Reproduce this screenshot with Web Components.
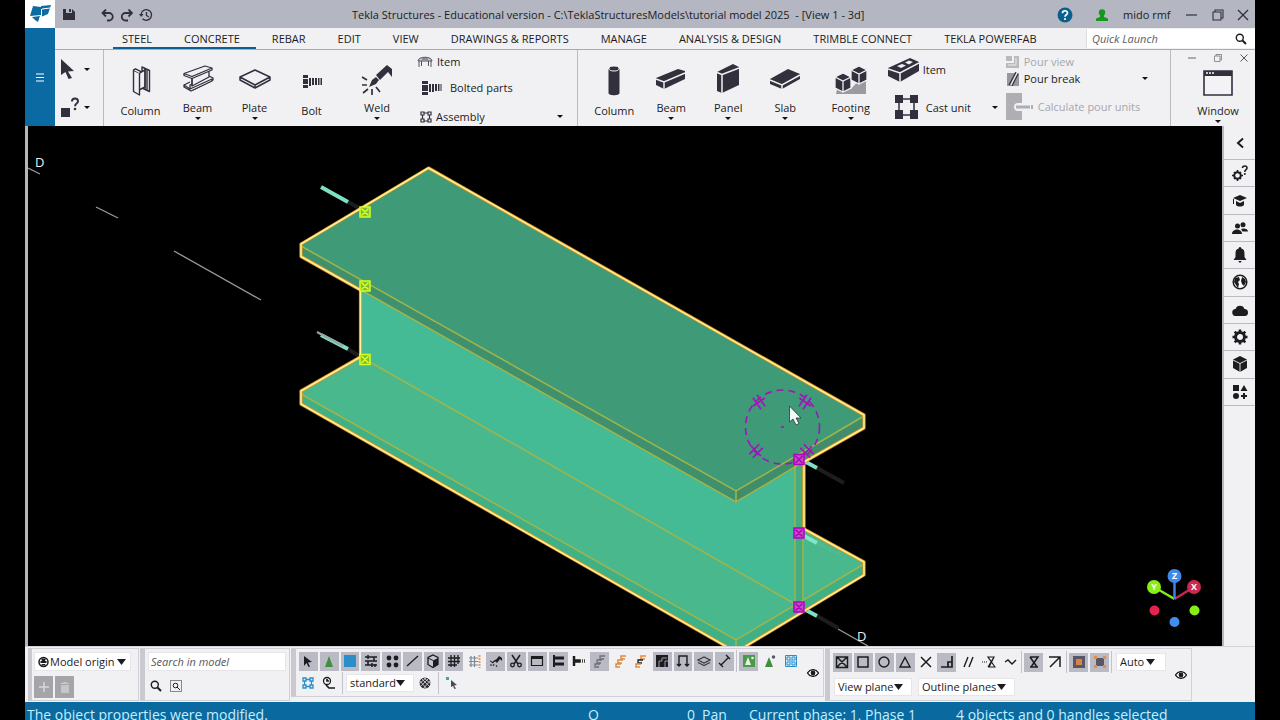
<!DOCTYPE html>
<html lang="en">
<head>
<meta charset="utf-8">
<title>Tekla Structures</title>
<style>
html,body{margin:0;height:100%;background:#000}
body{font-family:"Open Sans","Noto Sans",sans-serif;font-size:11px;color:#1c1b22}
</style>
</head>
<body>
<tk-app></tk-app>
<script>
const BASE = `*{box-sizing:border-box}
button,input,select{font:inherit;color:inherit;margin:0;padding:0;border:0;background:none;outline:0;border-radius:0}
button{display:flex;align-items:center;justify-content:center}
svg{display:block;flex:none}`;

function define(name, css, html) {
  const t = document.createElement('template');
  t.innerHTML = `<style>${BASE}${css}</style>${typeof html === 'string' ? html : ''}`;
  customElements.define(name, class extends HTMLElement {
    connectedCallback() {
      if (this.shadowRoot) return;
      const root = this.attachShadow({mode: 'open'});
      root.append(t.content.cloneNode(true));
      if (typeof html === 'function') root.innerHTML += html(this);
    }
  });
}

const D = '#33303e';
const K = '#1c1c20';
/* name: [width, height, markup] */
const ICONS = {
  logo: [24,20,`<g fill="#0a6ca3"><path d="M5 2l8 1 0 8-11 1z"/><path d="M13 2l10-1-3 9-7 3z"/><path d="M4 13l8-1-2 6-3-2z"/></g><path d="M13.500 5v8l-2 1M2 7l2-4M14 5l8-1" fill="none" stroke="#fff"/>`],
  save: [12,12,`<path d="M0 1h9l3 3v8H0z" fill="${D}"/><path d="M3 1h6v4H3z" fill="#b5b8c2"/><path d="M6 1h2v3H6z" fill="${D}"/>`],
  undo: [13,13,`<path d="M1 4h7a3.700 3.700 0 0 1 0 7.500H6M5 .5L1.500 4 5 7.500" fill="none" stroke="${D}" stroke-width="1.800"/>`],
  redo: [13,13,`<path d="M12 4H5.500a3.700 3.700 0 0 0 0 7.500H8M8.500.5L12 4 8.500 7.500" fill="none" stroke="${D}" stroke-width="1.800"/>`],
  history: [14,14,`<path d="M2 7a5.300 5.300 0 1 1 1.500 3.700M7.500 4v3.500l2.500 1.500" fill="none" stroke="${D}" stroke-width="1.300"/><path d="M0 6h4.500L2.200 9z" fill="${D}"/>`],
  help: [16,16,`<circle cx="8" cy="8" r="7.500" fill="#0a5f8d"/><path d="M5.500 6.200C5.500 3 10.500 3 10.500 6c0 1.700-2.500 1.800-2.500 3.800" fill="none" stroke="#fff" stroke-width="1.700"/><circle cx="8" cy="12" r="1.100" fill="#fff"/>`],
  user: [14,12,`<g fill="#19961f"><circle cx="7" cy="3.500" r="3.200"/><path d="M5 5h4v3l4 1.500V12H1V9.500L5 8z"/></g>`],
  min: [12,12,`<path d="M1 6h11" stroke="${D}" stroke-width="1.200"/>`],
  restore: [12,12,`<path d="M1 3h8v8H1zM3 3V1h8v8H9" fill="none" stroke="${D}" stroke-width="1.100"/>`],
  close: [12,12,`<path d="M1 1l10 10M11 1L1 11" stroke="${D}" stroke-width="1.300"/>`],
  minS: [8,8,`<path d="M0 4h8" stroke="#666"/>`],
  restoreS: [8,8,`<path d="M.5 2h5.500v5.500H.5zM2 2V.5h5.500V6H6" fill="none" stroke="#777" stroke-width=".8"/>`],
  closeS: [8,8,`<path d="M.5.5l7 7M7.500.5l-7 7" stroke="#555"/>`],
  menu: [8,9,`<path d="M0 1h8M0 4.500h8M0 8h8" stroke="#fff" stroke-width="1.200"/>`],
  search: [12,12,`<circle cx="4.800" cy="4.800" r="3.500" fill="none" stroke="${K}" stroke-width="1.400"/><path d="M7.500 7.500L11 11" stroke="${K}" stroke-width="2"/>`],
  caret: [6,3,`<path d="M0 0h6L3 3z" fill="#111"/>`],
  caretL: [9,6,`<path d="M0 0h9L4.500 6z" fill="#1c1c20"/>`],
  pointer: [14,20,`<path d="M0 0l13 12-6 .5 4 6.500-3.500 1-3-7L0 16z" fill="${D}"/>`],
  inquire: [19,20,`<path d="M0 11h9v9H0z" fill="${D}"/><path d="M11 4.500C11 .5 17 .5 17 4.200c0 2.300-3 2.300-3 5" fill="none" stroke="${D}" stroke-width="2"/><circle cx="14" cy="12" r="1.300" fill="${D}"/>`],
  colS: [32,32,`<g fill="#f1f1f4" stroke="${D}" stroke-width="1.400" stroke-linejoin="round"><path d="M17 3l7.500 3.500v21L17 24z"/><path d="M14 9l6-3v17l-6 3z"/><path d="M20 5v20M22 6v20"/><path d="M8.500 6l6 3v22l-6-3.500z"/><path d="M8.500 6l2-1.200 6 3-2 1.500"/></g>`],
  beamS: [32,32,`<g fill="#f1f1f4" stroke="${D}" stroke-width="1.300" stroke-linejoin="round"><path d="M8 21v3l3 2 20-10v-2l-4-2z"/><path d="M10 13l17-7v7L10 22z"/><path d="M2 9.500L23 2l7 2-20 8.500zM2 9.500v2l8 3 20-8.500V4"/><path d="M10 14v8M2 21l6 4 22-10v2L9 27l-7-4zM2 21l6-3"/></g>`],
  plateS: [32,32,`<path d="M1 13L16 6l15 7v3l-15 8L1 16zM1 13l15 8 15-8M16 21v3" fill="#f1f1f4" stroke="${D}" stroke-width="1.500" stroke-linejoin="round"/>`],
  boltS: [32,32,`<g fill="${D}"><path d="M7 11h5v3H7zM7 15h5v5H7zM7 21h5v3H7zM13 14h2v8h-2zM16 14h2v7h-2zM19 14h2v7h-2zM22 14h1.500v7H22zM24.500 14h1.500v7h-1.500z"/></g>`],
  weld: [32,32,`<path d="M15 11L26 1l5 4v8l-4-5-8 8z" fill="${D}"/><path d="M8 23l3-7 4-3 3 3-3 4z" fill="${D}"/><path d="M1 13l5 3M1 21h5M2 29l5-4M11 25v6M15 23l4 5" stroke="${D}" stroke-width="1.700"/>`],
  colC: [32,32,`<path d="M10.500 5v24c0 3 11 3 11 0V5z" fill="${D}"/><ellipse cx="16" cy="4.500" rx="5" ry="2.500" fill="${D}" stroke="#f1f1f4"/>`],
  beamC: [32,32,`<path d="M1 14l22-9 7 2v8L9 25l-8-4z" fill="${D}"/><path d="M1 15l8 3 21-9M9 18v8" stroke="#f1f1f4" stroke-width="1.400" fill="none"/>`],
  panel: [32,32,`<path d="M5 8L21 0l6 3v18L10 29l-5-2z" fill="${D}"/><path d="M5 8.500l5 2v19M10 10.500L27 4" stroke="#f1f1f4" stroke-width="1.500" fill="none"/>`],
  slab: [32,32,`<path d="M1 15l18-10 12 5v5L13 25 1 20z" fill="${D}"/><path d="M1 16l12 5 18-10M13 21v5" stroke="#f1f1f4" stroke-width="1.500" fill="none"/>`],
  footing: [32,32,`<path d="M2 25h14l8-9h7v14H1z" fill="#9a9aa0"/><g fill="${D}" stroke="#f1f1f4" stroke-width="1.300"><path d="M0 13l8-4 8 4v11l-8 4-8-4z"/><path d="M0 13l8 4 8-4M8 17v11"/><path d="M16 6l8-4 8 4v10l-8 4-8-4z"/><path d="M16 6l8 4 8-4M24 10v10"/></g>`],
  itemS: [16,14,`<path d="M1 6c0-5 14-5 14 0zM2 6v6M4.500 6v5M11.500 6v5M14 6v6M5 4h6" stroke="#55535e" fill="#c8c8ce"/>`],
  boltL: [21,14,`<g fill="${D}"><path d="M1 0h6v3H1zM1 4h6v6H1zM1 11h6v3H1zM8 3h2v8H8zM11 3h2v8h-2zM14 3h2v7h-2zM17 3h1.500v7H17zM19.500 3h1v7h-1z"/></g>`],
  assembly: [12,12,`<g fill="none" stroke="${D}" stroke-width="1.200"><path d="M1 1h3v3H1zM8 1h3v3H8zM1 8h3v3H1zM8 8h3v3H8zM4 2h4M4 10h4M2.500 4v4M9.500 4v4"/></g>`],
  itemC: [31,24,`<path d="M0 10L22 0l9 4v9L12 24 0 18z" fill="${D}"/><path d="M0 11l12 4L31 5M12 15v9" stroke="#f1f1f4" stroke-width="1.500" fill="none"/><g fill="#f1f1f4"><path d="M9 8l5-2 4 1.500-5 2.500zM17 4.500l4-2 4 1.500-4 2.500z"/></g>`],
  castunit: [24,24,`<g fill="${D}"><path d="M1 0h8v8H1zM16 0h8v8h-8zM1 15h8v9H1zM16 15h8v9h-8z"/></g><path d="M9 4h7M9 20h7M5 8v8M20 8v8" stroke="${D}" stroke-width="1.500"/>`],
  pourview: [14,14,`<path d="M0 1h6v5H0zM8 1h5v12H0V8h8z" fill="#b9b9be"/><path d="M10 3v7H2" stroke="#eee" fill="none"/>`],
  pourbreak: [14,14,`<path d="M1 1h12v13H1z" fill="#97979d"/><path d="M10 0L3 13M12 2L6 14" stroke="${D}" stroke-width="1.200"/><path d="M11 1L5 13" stroke="#fff"/>`],
  calc: [28,27,`<path d="M0 0h16v27H0z" fill="#aeaeb3"/><path d="M24 14H12" stroke="#f1f1f4" stroke-width="8" stroke-linecap="round"/><path d="M24 14H10" stroke="#aeaeb3" stroke-width="3"/><path d="M25 12h2v4h-2z" fill="#aeaeb3"/>`],
  window: [30,26,`<path d="M1 1h28v24H1z" fill="#f3f3f6" stroke="${D}" stroke-width="1.600"/><path d="M1 1h28v5H1z" fill="${D}"/><path d="M3 3h2M6 3h2M9 3h2" stroke="#fff" stroke-width="1.400"/>`],
  back: [10,12,`<path d="M8 1.500L3 6l5 4.500" fill="none" stroke="${K}" stroke-width="2"/>`],
  gearq: [16,16,`<circle cx="5.500" cy="10.500" r="3.300" fill="none" stroke="${K}" stroke-width="2"/><path d="M5.500 5v2M5.500 14v2M0 10.500h2M9 10.500h2M2 7l1 1M9 14l-1-1M2 14l1-1M9 7L8 8" stroke="${K}" stroke-width="1.600"/><path d="M10.500 3c0-2.700 4.500-2.700 4.500 0 0 1.800-2.200 1.600-2.200 4" fill="none" stroke="${K}" stroke-width="1.500"/><circle cx="12.800" cy="9" r="1" fill="${K}"/>`],
  grad: [16,13,`<path d="M1 4l7-3 7 3-7 3z" fill="${K}"/><path d="M4 7l4 2 4-2v4c-2 2-6 2-8 0z" fill="${K}"/><path d="M1.500 5v5" stroke="${K}"/>`],
  people: [16,12,`<g fill="${K}"><circle cx="5.500" cy="4" r="2.500"/><circle cx="11" cy="2.800" r="2.500"/><path d="M0 12c0-6 10-6 10 0zM9 7c3-1.500 7 0 7 2.500h-5.500z"/></g>`],
  bell: [14,16,`<path d="M7 0c1 0 1.300.8 1.300 1.500C11 2 11.500 4 11.500 7v3l2 3H.5l2-3V7c0-3 .5-5 3.200-5.500C5.700.8 6 0 7 0zM5.500 14h3c0 2-3 2-3 0z" fill="${K}"/>`],
  globe: [16,16,`<circle cx="8" cy="8" r="6.800" fill="#fff" stroke="${K}" stroke-width="1.500"/><path d="M3 4l4-1 1 3-2 2 1 2-1 4-2-3-2-3zM10 3l3 2 1 3-2 4-2-2-1-3z" fill="${K}"/>`],
  cloud: [16,12,`<path d="M4 12a3.500 3.500 0 0 1-.5-7A4.700 4.700 0 0 1 12.500 5 3.500 3.500 0 0 1 12.500 12z" fill="${K}"/>`],
  gear: [16,16,`<circle cx="8" cy="8" r="4.500" fill="none" stroke="${K}" stroke-width="3"/><path d="M8 .5v3M8 12.500v3M.5 8h3M12.500 8h3M2.700 2.700l2 2M11.300 11.300l2 2M2.700 13.300l2-2M11.300 4.700l2-2" stroke="${K}" stroke-width="2.600"/>`],
  cube: [16,16,`<path d="M8 0l7 3.500v8.500L8 16l-7-4V3.500z" fill="${K}"/><path d="M1 4l7 3.500L15 4M8 7.500V16" stroke="#eee" fill="none" stroke-width=".9"/>`],
  shapes: [16,16,`<path d="M1 1h6v6H1zM12 1l3.500 6h-7zM11 9h2v2h2v2h-2v2h-2v-2H9v-2h2z" fill="${K}"/><circle cx="4" cy="12" r="3" fill="${K}"/>`],
  helmet: [11,12,`<circle cx="5.500" cy="6" r="4.500" fill="#fff" stroke="${K}" stroke-width="1.500"/><path d="M2.500 6h6" stroke="${K}" stroke-width="2"/><path d="M3 2.500h5L7 5H4zM3 9.500h5L7 8H4z" fill="${K}"/>`],
  plus: [12,12,`<path d="M6 1v10M1 6h10" stroke="#d8d8da" stroke-width="1.500"/>`],
  trash: [12,12,`<path d="M2 4h8v8H2zM1.500 2H10v1H1.500zM4 1h4v1H4z" fill="#c6c6ca"/>`],
  searchbox: [12,12,`<path d="M.5.5h11v11H.5z" fill="none" stroke="${K}" stroke-dasharray="1 1"/><circle cx="5.500" cy="5.500" r="2.300" fill="none" stroke="${K}"/><path d="M7 7l3 3" stroke="${K}"/>`],
  eye: [12,8,`<path d="M.5 4c3-4.500 8-4.500 11 0-3 4.500-8 4.500-11 0z" fill="#fff" stroke="${K}" stroke-width="1.300"/><circle cx="6" cy="4" r="2.400" fill="${K}"/>`],
  t1: [14,14,`<path d="M3 2l8 6-4 .5 2 4-1.500.5-2-4L3 12z" fill="${K}"/>`],
  t2: [14,14,`<path d="M7 2l4 11H3z" fill="#3f8f3c"/>`],
  t3: [14,14,`<path d="M1 1h12v12H1z" fill="#2b8ec9"/>`],
  t4: [14,14,`<path d="M1 3h12M1 7h12M1 11h12M4 1v4M10 3v4M4 7v4M8 9v4M11 10v3" stroke="${K}" stroke-width="1.500"/>`],
  t5: [14,14,`<g fill="${K}"><circle cx="4" cy="4" r="2.400"/><circle cx="11" cy="4" r="2.400"/><circle cx="4" cy="11" r="2.400"/><circle cx="11" cy="11" r="2.400"/></g>`],
  t6: [14,14,`<path d="M2 12L13 2" stroke="${K}" stroke-width="1.300"/>`],
  t7: [14,14,`<path d="M7 1l5 2.500v7L7 13.500 2 10.500v-7z" fill="#c6c7cc" stroke="${K}" stroke-width="1.300"/><path d="M7 6.500L12 4v6.500l-5 3z" fill="${K}"/><path d="M2 4l5 2.500" stroke="${K}"/>`],
  t8: [14,14,`<path d="M1 4h12M1 7.500h12M1 11h9M4 1v12M7.500 1v12M11 1v9" stroke="${K}" stroke-width="1.300"/>`],
  t9: [14,14,`<path d="M1 4h9M1 7.500h9M1 11h9M3 2v11M6.500 2v11" stroke="#7a8794" stroke-width="1.200"/><path d="M11.500 1v13" stroke="#e0a060" stroke-width="2" stroke-dasharray="2 1"/>`],
  t10:[14,14,`<path d="M6 7l4-5 3 2v3l-2-2-3 4z" fill="${K}"/><path d="M1 7l2 1M1 11h2M4 12l1-2M7 11l1 2" stroke="${K}"/><path d="M3 9l4-3" stroke="${K}" stroke-width="1.500"/>`],
  t11:[14,14,`<path d="M3 1l6 9M11 1L5 10" stroke="${K}" stroke-width="1.500"/><circle cx="3.500" cy="11" r="1.800" fill="none" stroke="${K}" stroke-width="1.300"/><circle cx="10.500" cy="11" r="1.800" fill="none" stroke="${K}" stroke-width="1.300"/>`],
  t12:[14,14,`<path d="M1.500 2.500h11v9h-11z" fill="none" stroke="${K}" stroke-width="1.200"/><path d="M1 2h12v3H1z" fill="${K}"/>`],
  t13:[14,14,`<path d="M3 1v12" stroke="${K}" stroke-width="2"/><path d="M3 4h10M3 10h10" stroke="${K}" stroke-width="3"/>`],
  t14:[14,14,`<path d="M2 2v10" stroke="${K}" stroke-width="2.500"/><path d="M3 7h5" stroke="${K}" stroke-width="3.500"/><path d="M8 7h5" stroke="#444" stroke-width="3.500" stroke-dasharray="1 1"/>`],
  t15:[14,14,`<path d="M12 2H7v3h4M9 6H4v3h4M7 10H2v3h4" stroke="#70707a" fill="none" stroke-width="1.300"/>`],
  t16:[14,14,`<path d="M12 2H7v3h4M9 6H4v3h4M7 10H2v3h4" stroke="#e08a40" fill="none" stroke-width="1.500"/>`],
  t17:[14,14,`<path d="M12 2H7v3h4" stroke="#e08a40" fill="none" stroke-width="1.500"/><path d="M9 6H4v3h4" stroke="${K}" fill="none" stroke-width="1.300"/><path d="M7 10H2v3h4" stroke="#e08a40" fill="none" stroke-width="1.500"/>`],
  t18:[14,14,`<path d="M1 1h12v12H1z" fill="${K}"/><path d="M4 13V7h3V4h5M10 13V7h3" stroke="#9a9aa2" fill="none"/>`],
  t19:[14,14,`<path d="M3 12V2h8v10M1 10l2 2 2-2M9 10l2 2 2-2" stroke="${K}" fill="none" stroke-width="1.400"/>`],
  t20:[14,14,`<path d="M1 6l6-3 6 3-6 3zM1 8.500l6 3 6-3" fill="none" stroke="#3c3c44" stroke-width="1.200"/>`],
  t21:[14,14,`<path d="M1 9l4 4M8 1l4 4M3 11l7-7" stroke="${K}" fill="none" stroke-width="1.400"/>`],
  g1:[14,14,`<path d="M1 1h12v12H1z" fill="#4b9a4b"/><path d="M6 3l3 8H3z" fill="#e6f4e0"/><circle cx="10.500" cy="4" r="1.300" fill="#e6f4e0"/>`],
  g2:[14,14,`<path d="M6 3l4 10H2z" fill="#3f8f3c"/><circle cx="10.500" cy="3" r="1.700" fill="#556"/>`],
  g3:[14,14,`<path d="M1.500 1.500h11v11h-11z" fill="#d8eef8" stroke="#2b8ec9"/><path d="M3 3h3v3H3zM8 3h3v3H8zM3 8h3v3H3zM8 8h3v3H8zM6 7h2" stroke="#2b8ec9" fill="none"/>`],
  h1:[14,14,`<g fill="none" stroke="#2b8ec9" stroke-width="1.300"><path d="M2 2h3v3H2zM9 2h3v3H9zM2 9h3v3H2zM9 9h3v3H9zM5 3.500h4M5 10.500h4M3.500 5v4M10.500 5v4"/></g>`],
  h2:[14,14,`<circle cx="5" cy="5" r="3.500" fill="none" stroke="${K}" stroke-width="1.300"/><path d="M5 3v2h2M4 9l3 3h6" stroke="${K}" fill="none" stroke-width="1.700"/>`],
  h3:[14,14,`<circle cx="7" cy="7" r="5.500" fill="#2c2c32"/><path d="M3 2l9 9M2 5l7 8M5 1l8 7M11 2l-9 9M12 5l-7 8M9 1L1 8" stroke="#f1f1f4" stroke-width=".7"/>`],
  h4:[14,14,`<path d="M1 1h3v3H1z" fill="#39a7a7"/><path d="M6 4l6 5-3 .5 2 3-1.500.5-1.500-3L6 11z" fill="#4a4a55"/>`],
  s1:[14,14,`<path d="M1.500 2h11v10.500h-11zM2 2l10 10M12 2L2 12" fill="none" stroke="${K}" stroke-width="1.500"/>`],
  s2:[14,14,`<path d="M2 2h10v10H2z" fill="none" stroke="${K}" stroke-width="1.500"/>`],
  s3:[14,14,`<circle cx="7" cy="7" r="5" fill="none" stroke="${K}" stroke-width="1.400"/>`],
  s4:[14,14,`<path d="M7 2.500l5 9.500H2z" fill="none" stroke="${K}" stroke-width="1.400"/>`],
  s5:[14,14,`<path d="M2 2l10 10M12 2L2 12" stroke="${K}" stroke-width="1.500"/>`],
  s6:[14,14,`<path d="M12 1v11H1M12 7H8v5" fill="none" stroke="${K}" stroke-width="1.700"/>`],
  s7:[14,14,`<path d="M3 12L7 2M8 12l4-10" stroke="${K}" stroke-width="1.400"/>`],
  s8:[14,14,`<path d="M6 2h6L7 12h6zM12 2L6 12" fill="none" stroke="${K}" stroke-width="1.200"/><path d="M0 7h6" stroke="${K}" stroke-dasharray="1 1"/>`],
  s9:[14,14,`<path d="M2 7l3-2 4 4 4-4" fill="none" stroke="${K}" stroke-width="1.400"/>`],
  s10:[14,14,`<path d="M3 2h8L4 12M3 2l7 10M3 12h8" fill="none" stroke="${K}" stroke-width="1.500"/>`],
  s11:[14,14,`<path d="M1 2h11v10M12 2L2 12" fill="none" stroke="${K}" stroke-width="1.500"/>`],
  s12:[14,14,`<path d="M1 1h12v12H1z" fill="#5a566a"/><path d="M4 4h6v6H4z" fill="#d98443"/>`],
  s13:[14,14,`<path d="M3 3h8v8H3z" fill="#5a566a"/><path d="M1 1h3v3H1zM10 1h3v3h-3zM1 10h3v3H1zM10 10h3v3h-3z" fill="#d99050"/>`]
};
define('tk-icon', `:host{display:block;flex:none}`, el => {
  const [w, h, m] = ICONS[el.getAttribute('name')];
  return `<svg width="${w}" height="${h}" viewBox="0 0 ${w} ${h}" aria-hidden="true">${m}</svg>`;
});
const ic = n => `<tk-icon name="${n}"></tk-icon>`;

define('tk-titlebar', `:host{display:flex;height:28px;background:#b4b7c1;align-items:center}
.logo{width:30px;height:28px;background:#fff;display:grid;place-items:center}
.quick{display:flex;align-items:center;width:297px;padding-left:8px}
.quick button{height:24px}
.quick .save{width:12px;margin-right:23px}
.quick .u{width:19px;margin:2px 0 0}
h1{margin:0;font-size:11px;font-weight:500;line-height:28px;flex:1;white-space:pre;padding-top:2px}
.sys{display:flex;align-items:center;height:28px;line-height:28px;padding-top:1px}
.sys button{width:27px;height:28px}
.sys .help{width:42px}.sys .acct{width:37px;padding-right:5px}
.who{width:54px}
.sys .x{width:24px}`, `
<div class="logo">${ic('logo')}</div>
<div class="quick"><button class="save" aria-label="Save">${ic('save')}</button><button class="u" aria-label="Undo">${ic('undo')}</button><button class="u" aria-label="Redo">${ic('redo')}</button><button class="u" aria-label="History">${ic('history')}</button></div>
<h1>Tekla Structures - Educational version - C:\\TeklaStructuresModels\\tutorial model 2025  - [View 1 - 3d]</h1>
<div class="sys"><button class="help" aria-label="Help">${ic('help')}</button><button class="acct" aria-label="Account">${ic('user')}</button><span class="who">mido rmf</span><button aria-label="Minimize">${ic('min')}</button><button aria-label="Restore">${ic('restore')}</button><button class="x" aria-label="Close">${ic('close')}</button></div>`);

define('tk-tabs', `:host{display:flex;height:22px;border-bottom:1px solid #a9abb5;background:#f1f1f4}
nav{display:flex;flex:1;padding-left:58px}
a{color:inherit;text-decoration:none;line-height:21px;height:21px;padding:0 16px;white-space:nowrap;border-bottom:2px solid transparent}
a:first-child{padding-left:9px}
a.on{border-color:#0a6196}
label{width:169px;display:flex;align-items:center;background:#fff;margin:1px 0;padding:0 8px 0 5px;border-left:1px solid #dcdce2}
input{flex:1;min-width:0;font-style:italic}
input::placeholder{color:#5b5b64;opacity:1}`, `
<nav>${['STEEL','CONCRETE','REBAR','EDIT','VIEW','DRAWINGS &amp; REPORTS','MANAGE','ANALYSIS &amp; DESIGN','TRIMBLE CONNECT','TEKLA POWERFAB'].map((t,i)=>`<a href="#"${i<2?' class="on"':''}>${t}</a>`).join('')}</nav>
<label><input type="search" placeholder="Quick Launch" aria-label="Quick Launch">${ic('search')}</label>`);

define('tk-tool', `:host{display:block;width:57px;flex:none}
:host([wide]){width:74px}
button{width:100%;height:76px;flex-direction:column;justify-content:flex-start;padding-top:14px}
.label{line-height:14px;margin-top:8px}
:host([menu]) .label{margin-top:5px;margin-bottom:2px}
.caret{display:none}
:host([menu]) .caret{display:block}`, el => `<button><tk-icon name="${el.getAttribute('icon')}"></tk-icon><span class="label"><slot></slot></span><tk-icon class="caret" name="caret"></tk-icon></button>`);

define('tk-command', `:host{display:flex}
button{gap:4px;flex:1;justify-content:flex-start;white-space:nowrap}
:host([roomy]) button{gap:8px}
:host([disabled]) button{color:#a6a6ac}
.end{margin-left:auto}`, el => `<button${el.hasAttribute('disabled')?' disabled':''}><tk-icon name="${el.getAttribute('icon')}"></tk-icon><span><slot></slot></span>${el.hasAttribute('menu')?'<tk-icon class="end" name="caret"></tk-icon>':''}</button>`);

define('tk-ribbon', `:host{display:flex;height:76px;background:#f1f1f4;overflow:hidden}
section{display:flex;border-right:1px solid #b9bac2}
.sel{width:49px;flex-direction:column;padding:9px 13px 0 6px;gap:18px}
.sel button{height:20px;justify-content:space-between;width:100%}
.steel{flex:474 0 0;padding-left:8px}
.conc{flex:596 0 0;padding-left:8px}
.list{display:grid;flex:1;padding:0 14px 0 3px}
.l1{grid-template-rows:23px 29px 24px}
.l1 tk-command:nth-child(2){padding-left:4px}
.l1 tk-command:nth-child(3){padding:5px 0 0 3px}
.l2{grid-template-rows:39px 36px;flex:0 0 110px;padding:0}
.l2 tk-command:nth-child(2){padding-left:6px}
.l3{grid-template-rows:17px 17px 38px;padding:3px 22px 0 8px}
.win{border:0;width:84px;flex-direction:column;flex:none}
.mdi{display:flex;justify-content:space-between;padding:0 3px 0 13px;height:16px}
.mdi button{width:16px;height:16px}
.w{flex-direction:column;height:60px;justify-content:flex-start;padding:4px 0 0 10px}
.w span{line-height:14px;margin:8px 0 2px}`, `
<section class="sel"><button aria-label="Select">${ic('pointer')}${ic('caret')}</button><button aria-label="Inquire">${ic('inquire')}${ic('caret')}</button></section>
<section class="steel">
<tk-tool icon="colS">Column</tk-tool><tk-tool icon="beamS" menu>Beam</tk-tool><tk-tool icon="plateS" menu>Plate</tk-tool><tk-tool icon="boltS">Bolt</tk-tool><tk-tool icon="weld" menu wide>Weld</tk-tool>
<div class="list l1"><tk-command icon="itemS">Item</tk-command><tk-command icon="boltL" roomy>Bolted parts</tk-command><tk-command icon="assembly" menu>Assembly</tk-command></div>
</section>
<section class="conc">
<tk-tool icon="colC">Column</tk-tool><tk-tool icon="beamC" menu>Beam</tk-tool><tk-tool icon="panel" menu>Panel</tk-tool><tk-tool icon="slab" menu>Slab</tk-tool><tk-tool icon="footing" menu wide>Footing</tk-tool>
<div class="list l2"><tk-command icon="itemC">Item</tk-command><tk-command icon="castunit" menu roomy>Cast unit</tk-command></div>
<div class="list l3"><tk-command icon="pourview" disabled>Pour view</tk-command><tk-command icon="pourbreak" menu>Pour break</tk-command><tk-command icon="calc" disabled>Calculate pour units</tk-command></div>
</section>
<section class="win"><div class="mdi"><button aria-label="Minimize view">${ic('minS')}</button><button aria-label="Restore view">${ic('restoreS')}</button><button aria-label="Close view">${ic('closeS')}</button></div>
<button class="w">${ic('window')}<span>Window</span>${ic('caret')}</button></section>`);

const mark = (x,y,c,f) => `<g transform="translate(${x} ${y})" fill="${f}" stroke="${c}" stroke-width="1.500"><path d="M-5-5H5V5H-5zM-3.500-3.500l7 7M3.500-3.500l-7 7"/></g>`;
const tick = (x,y,a) => `<path transform="translate(${x} ${y}) rotate(${a})" d="M-2.500-7V7M2.500-7V7M-7 0H7"/>`;
const OUTLINE = 'M428.500 168L301 244v12.500L360.500 290v67L301 391v13L736 652 864 575v-13L804 529V462l60-34v-13z';
define('tk-viewport', `:host{display:block;flex:1;min-width:0;background:#000;border-left:3px solid #b6b7bd;overflow:hidden}
svg{width:100%;height:100%}
text{font-family:"Open Sans",sans-serif}`, `
<svg viewBox="28 126 1194 520" preserveAspectRatio="xMidYMid slice" role="img" aria-label="3d view of the model">
<g stroke="#9a9a9a" stroke-width="1.300"><path d="M28 168l12 6M96 207l22 11M174 251l87 49M838 629l30 17"/></g>
<g stroke="#1d1d1f" stroke-width="4"><path d="M348 202l13 7M348 349l13 8M817 468l27 15M817 616l21 12"/></g>
<g stroke="#7fe0c4" stroke-width="4"><path d="M321 187l27 15M321 335l27 14M804 461l13 7M804 609l13 7"/></g>
<path d="M317 332l26 14" stroke="#9aa5a5" stroke-width="2"/>
<path d="M360 357L301 391v13L736 652 864 575v-13L804 529z" fill="#49b88d"/>
<path d="M301 394L736 640 864 564v11L736 652 301 404z" fill="#40b187"/>
<path d="M360 287v70l435 247h9V461L736 400z" fill="#44bb95"/>
<path d="M795 463h9v142h-9z" fill="#45ab83"/>
<path d="M428.500 168L301 244v12.500L736 502 864 428v-13z" fill="#3f9a77"/>
<path d="M301 247L736 491v11L301 256.500z" fill="#3f916e"/><path d="M736 491l128-74v11L736 502z" fill="#3f8d6a"/>
<g fill="none" stroke="#a2b44a" stroke-width="1.500"><path d="M301 246L736 491 864 416M736 491v11M361 290L736 502 800 464M361 357L795 604M795 464V604M803 464V604M301 394L736 640 864 564M736 640v10M795 604l-2 2"/></g>
<g fill="none" stroke-linejoin="round"><path d="${OUTLINE}" stroke="#d9961c" stroke-width="3.200"/><path d="${OUTLINE}" stroke="#fff0a0" stroke-width="1.500"/></g>
<path d="M804 536l13 7" stroke="#7fe8c8" stroke-width="4"/><path d="M817 543l24 12" stroke="#55b890" stroke-width="3"/>
<g fill="none" stroke="#a014bc" stroke-width="1.600"><circle cx="782.500" cy="427" r="37" stroke-dasharray="7 5"/>${tick(759,402,-35)}${tick(805,402,35)}${tick(756,451,45)}${tick(807,451,-45)}<path d="M781 427h3"/></g>
${mark(365,212,'#d6ff1c','#7dbd3c')}${mark(365,286,'#d6ff1c','#7dbd3c')}${mark(365,359.500,'#d6ff1c','#7dbd3c')}
${mark(799,459.500,'#b000c4','#c050b8')}${mark(799,533,'#b000c4','#c050b8')}${mark(799,607,'#b000c4','#c050b8')}
<path d="M789.500 406v16l3.500-3 3 6 3-1.500-3-5.500h5z" fill="#f4f8f8" stroke="#333" stroke-width=".8"/>
<g fill="#f0f0f0" font-size="13"><text x="35" y="167">D</text><text x="857" y="641">D</text></g>
<g stroke-width="2.500"><path d="M1174.500 599L1154 587" stroke="#86ea18"/><path d="M1174.500 599L1194 587" stroke="#c62850"/><path d="M1174.500 599V576" stroke="#3f83e0"/></g>
<circle cx="1154" cy="587" r="7" fill="#88ee18"/><circle cx="1194" cy="587" r="7" fill="#cc2850"/><circle cx="1174.500" cy="576" r="7" fill="#3f8ae8"/>
<circle cx="1154.500" cy="610.500" r="5" fill="#e4244f"/><circle cx="1194.500" cy="610.500" r="5" fill="#88ee18"/><circle cx="1174.500" cy="622" r="5" fill="#3f8ef0"/>
<g fill="#fff" font-size="9" font-weight="700" text-anchor="middle"><text x="1154" y="590">Y</text><text x="1194" y="590">X</text><text x="1174.500" y="579">Z</text></g>
</svg>`);

define('tk-sidepane', `:host{display:block;width:33px;flex:none;background:#f1f1f4;border-left:2px solid #b6b7bd}
button{width:100%;border-bottom:1px solid #b9bac2}
.first{height:34px}
.rest{display:grid;grid-template-rows:repeat(9,1fr);height:246px}`, `
<button class="first" aria-label="Collapse">${ic('back')}</button>
<div class="rest">${[['gearq','Properties'],['grad','Learn'],['people','Collaboration'],['bell','Notifications'],['globe','Online'],['cloud','Cloud'],['gear','Settings'],['cube','Reference models'],['shapes','Applications']].map(([n,l])=>`<button aria-label="${l}">${ic(n)}</button>`).join('')}</div>`);

define('tk-select', `:host{display:inline-grid;background:#fff;height:18px;border:1px solid #e6e6ea;align-items:center}
select{appearance:none;grid-area:1/1;width:100%;height:16px;padding-left:3px;line-height:16px}
tk-icon{grid-area:1/1;justify-self:end;margin-right:var(--caret-gap,8px);pointer-events:none}
.lead{justify-self:start;margin-left:3px}
:host([lead]) select{padding-left:15px}`, el => `<select aria-label="${el.getAttribute('label')}"><option>${el.textContent}</option></select>${el.hasAttribute('lead')?'<tk-icon class="lead" name="helmet"></tk-icon>':''}<tk-icon name="caretL"></tk-icon>`);

const tb = (n, on) => `<button class="${on?'on':''}" aria-label="Switch ${n}">${ic(n)}</button>`;
define('tk-toolbars', `:host{display:flex;height:56px;background:#f1f1f4;padding:1px 0 1px 3px;align-items:flex-start;border-top:1px solid #d4d4d8}
section{border:1px solid #d0d0d6;border-left:5px solid #c9c9cf;height:53px;margin-right:1px;flex:none;display:flex}
.row{display:flex;align-items:center}
.a{width:111px;flex-direction:column;padding:3px 0 0 2px;gap:5px;border-left-width:4px}
.a tk-select{width:97px;height:19px;--caret-gap:4px}
.a .row{gap:2px;padding:0}.a .row button{width:19px;height:22px;background:#a4a4a9}
.b{width:150px;flex-direction:column;padding:3px 3px;gap:7px}
.b input{width:138px;height:19px;background:#fff;border:1px solid #e6e6ea;padding:0 2px;font-style:italic}
.b input::placeholder{color:#55555e;opacity:1}
.b .row{gap:8px;padding-left:2px;height:16px}
.c{width:533px;height:49px}.d{width:367px}
.main{flex:1;display:grid;grid-template-rows:20px 20px;row-gap:2px;padding:2px 0 0 2px}
.strip{display:grid;column-gap:2px;height:19px}
.strip button{height:19px;min-width:0}
.on{background:#b9bac3}
.sep{width:1px;height:22px;background:#c3c4cb;flex:none;margin:0 5px}
.c .sep{margin:0 2px}
.s21{grid-template-columns:repeat(21,1fr);width:435px}
.s3{grid-template-columns:repeat(3,1fr);width:61px}
.s9{grid-template-columns:repeat(9,1fr);width:186px}
.s2{grid-template-columns:repeat(2,1fr);width:40px}
.two{display:flex;align-items:center}
.eye{width:20px;flex:none;align-self:center}
.c .two{gap:1px}
.two button{width:20px;height:19px}
.d .main{padding-top:3px;grid-template-rows:20px 26px}
.d .sep{margin:0 2px}
.d .two{gap:6px;padding-left:2px}
.row{padding-left:1px}
.std{width:68px}.auto{width:50px;margin-left:2px;--caret-gap:10px}.vp{width:78px}.op{width:97px}`, `
<section class="a"><tk-select lead label="Origin">Model origin</tk-select><div class="row"><button aria-label="Add">${ic('plus')}</button><button aria-label="Delete">${ic('trash')}</button></div></section>
<section class="b"><input type="search" placeholder="Search in model" aria-label="Search in model"><div class="row"><button aria-label="Search">${ic('search')}</button><button aria-label="Search in selection">${ic('searchbox')}</button></div></section>
<section class="c"><div class="main"><div class="row"><div class="strip s21">${Array.from({length:21},(_,i)=>tb('t'+(i+1),![8,13,15,16].includes(i))).join('')}</div><i class="sep"></i><div class="strip s3">${tb('g1',1)}${tb('g2')}${tb('g3')}</div></div>
<div class="two"><button aria-label="Assemblies">${ic('h1')}</button><button aria-label="Tasks">${ic('h2')}</button><i class="sep"></i><tk-select class="std" label="Selection filter">standard</tk-select><button aria-label="Filter">${ic('h3')}</button><i class="sep"></i><button aria-label="Drag and drop">${ic('h4')}</button></div></div>
<button class="eye" aria-label="Show or hide switches">${ic('eye')}</button></section>
<section class="d"><div class="main"><div class="row"><div class="strip s9">${Array.from({length:9},(_,i)=>tb('s'+(i+1),[0,1,2,3,5].includes(i))).join('')}</div><i class="sep"></i><div class="strip s2">${tb('s10',1)}${tb('s11')}</div><i class="sep"></i><div class="strip s2">${tb('s12',1)}${tb('s13',1)}</div><i class="sep"></i><tk-select class="auto" label="Snap depth">Auto</tk-select></div>
<div class="two"><tk-select class="vp" label="Plane">View plane</tk-select><tk-select class="op" label="Outline">Outline planes</tk-select></div></div>
<button class="eye" aria-label="Show or hide snaps">${ic('eye')}</button></section>`);

define('tk-status', `:host{display:grid;grid-template-columns:561fr 99fr 15fr 47fr 207fr 299fr;height:18px;line-height:26px;overflow:hidden;background:#0a699f;color:#c4efff;font-size:14px;padding-left:2px;white-space:nowrap}
span{min-width:0}`,
`<span>The object properties were modified.</span><span>O</span><span>0</span><span>Pan</span><span>Current phase: 1, Phase 1</span><span>4 objects and 0 handles selected</span>`);

define('tk-app', `:host{display:flex;flex-direction:column;min-height:100vh;margin:0 25px;background:#f1f1f4}
.head{display:flex}.head>button{width:30px;background:#0a6aa1;flex:none}
.head>div{flex:1;min-width:0}
main{flex:1;display:flex;min-height:0}
tk-viewport{height:calc(100vh - 200px)}`, `
<tk-titlebar></tk-titlebar>
<div class="head"><button aria-label="Menu">${ic('menu')}</button><div><tk-tabs></tk-tabs><tk-ribbon></tk-ribbon></div></div>
<main><tk-viewport></tk-viewport><tk-sidepane></tk-sidepane></main>
<tk-toolbars></tk-toolbars><tk-status></tk-status>`);
</script>
</body>
</html>
